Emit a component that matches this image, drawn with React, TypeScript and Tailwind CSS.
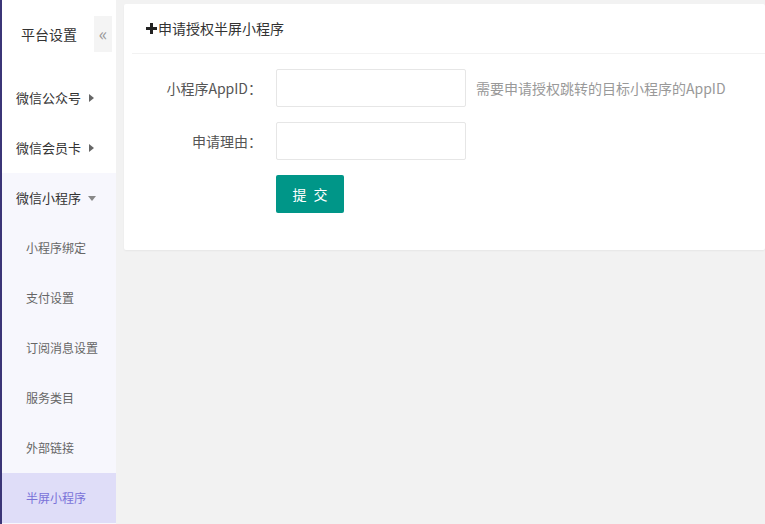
import React from "react";

const font = { fontFamily: '"Noto Sans CJK SC", "Noto Sans", sans-serif' };

function RightTri() {
  return (
    <svg width="5" height="8" viewBox="0 0 5 8" className="ml-[8px]">
      <path d="M0 0 L5 4 L0 8 Z" fill="#666" />
    </svg>
  );
}
function DownTri() {
  return (
    <svg width="8" height="5" viewBox="0 0 8 5" className="ml-[7px]">
      <path d="M0 0 L8 0 L4 5 Z" fill="#888" />
    </svg>
  );
}

export default function App() {
  const subs = ["小程序绑定", "支付设置", "订阅消息设置", "服务类目", "外部链接"];
  return (
    <div
      className="flex w-[765px] h-[524px] overflow-hidden bg-[#f2f2f2] text-[14px]"
      style={font}
    >
      <aside className="w-[116px] shrink-0 h-full bg-white border-l-2 border-[#3b3577] flex flex-col">
        <div className="h-[73px] relative flex">
          <div className="pl-[19px] pt-[24px] text-[14px] text-[#333]">平台设置</div>
          <div className="absolute left-[92px] top-[16px] w-[18px] h-[36px] bg-[#f4f4f4] flex items-center justify-center text-[#999] text-[18px] leading-none pb-[2px]">
            «
          </div>
        </div>
        <div className="h-[50px] flex items-center pl-[14px] text-[13px] text-[#333]">
          微信公众号<RightTri />
        </div>
        <div className="h-[50px] flex items-center pl-[14px] text-[13px] text-[#333]">
          微信会员卡<RightTri />
        </div>
        <div className="flex-1 bg-[#f7f7fd] flex flex-col">
          <div className="h-[50px] shrink-0 flex items-center pl-[14px] text-[13px] text-[#333]">
            微信小程序<DownTri />
          </div>
          {subs.map((s) => (
            <div key={s} className="h-[50px] shrink-0 flex items-center pl-[24px] text-[12px] text-[#666]">
              {s}
            </div>
          ))}
          <div className="h-[50px] shrink-0 flex items-center pl-[24px] text-[12px] text-[#7a72d8] bg-[#dfddf8]">
            半屏小程序
          </div>
        </div>
      </aside>
      <main className="flex-1 pl-[8px] pt-[4px]">
        <div className="bg-white h-[246px] rounded-[2px] shadow-[0_1px_2px_0_rgba(0,0,0,0.05)]">
          <div className="ml-[8px] h-[50px] border-b border-[#f2f2f2] flex items-center pl-[14px] text-[14px] text-[#333]">
            <svg width="11" height="11" viewBox="0 0 11 11" className="mr-[1px]">
              <rect x="4" y="0" width="3" height="11" fill="#222" />
              <rect x="0" y="4" width="11" height="3" fill="#222" />
            </svg>
            申请授权半屏小程序
          </div>
          <div className="pt-[15px] flex flex-col gap-[15px]">
            <div className="flex items-center">
              <label className="w-[138px] text-right text-[#555]">小程序AppID：</label>
              <div className="ml-[14px] w-[190px] h-[38px] border border-[#e6e6e6] rounded-[2px]" />
              <span className="ml-[10px] text-[#999]">需要申请授权跳转的目标小程序的AppID</span>
            </div>
            <div className="flex items-center">
              <label className="w-[138px] text-right text-[#555]">申请理由：</label>
              <div className="ml-[14px] w-[190px] h-[38px] border border-[#e6e6e6] rounded-[2px]" />
            </div>
            <div className="flex items-center">
              <div className="w-[138px]" />
              <button className="ml-[14px] w-[68px] h-[38px] bg-[#009688] text-white rounded-[2px] text-[14px] tracking-[2px] pl-[2px]">
                提 交
              </button>
            </div>
          </div>
        </div>
      </main>
    </div>
  );
}
